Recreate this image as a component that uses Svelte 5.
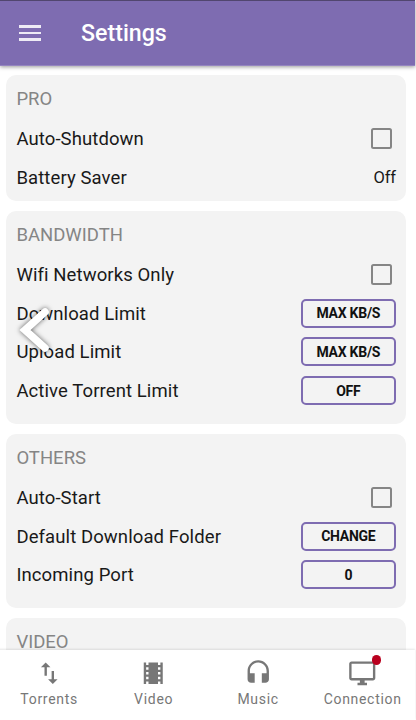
<script lang="ts">
  interface Row {
    label: string;
    kind: "check" | "text" | "button";
    value?: string;
  }

  interface Section {
    title: string;
    compact?: boolean;
    rows: Row[];
  }

  const sections: Section[] = [
    {
      title: "PRO",
      compact: true,
      rows: [
        { label: "Auto-Shutdown", kind: "check" },
        { label: "Battery Saver", kind: "text", value: "Off" }
      ]
    },
    {
      title: "BANDWIDTH",
      rows: [
        { label: "Wifi Networks Only", kind: "check" },
        { label: "Download Limit", kind: "button", value: "MAX KB/S" },
        { label: "Upload Limit", kind: "button", value: "MAX KB/S" },
        { label: "Active Torrent Limit", kind: "button", value: "OFF" }
      ]
    },
    {
      title: "OTHERS",
      rows: [
        { label: "Auto-Start", kind: "check" },
        { label: "Default Download Folder", kind: "button", value: "CHANGE" },
        { label: "Incoming Port", kind: "button", value: "0" }
      ]
    },
    { title: "VIDEO", rows: [] }
  ];

  const tabs = [
    {
      label: "Torrents",
      icon: "M9 3L5 6.99h3V14h2V6.99h3L9 3zm7 14.01V10h-2v7.01h-3L15 21l4-3.99h-3z"
    },
    {
      label: "Video",
      icon: "M18 3v2h-2V3H8v2H6V3H4v18h2v-2h2v2h8v-2h2v2h2V3h-2zM8 17H6v-2h2v2zm0-4H6v-2h2v2zm0-4H6V7h2v2zm10 8h-2v-2h2v2zm0-4h-2v-2h2v2zm0-4h-2V7h2v2z"
    },
    {
      label: "Music",
      icon: "M12 1c-4.97 0-9 4.03-9 9v7c0 1.66 1.34 3 3 3h3v-8H5v-2c0-3.87 3.13-7 7-7s7 3.13 7 7v2h-4v8h3c1.66 0 3-1.34 3-3v-7c0-4.97-4.03-9-9-9z"
    },
    {
      label: "Connection",
      icon: "M21 2H3c-1.1 0-2 .9-2 2v12c0 1.1.9 2 2 2h7v2H8v2h8v-2h-2v-2h7c1.1 0 2-.9 2-2V4c0-1.1-.9-2-2-2zm0 14H3V4h18v12z",
      alert: true
    }
  ];

  let checks: Record<string, boolean> = $state({});
</script>

<div class="screen">
  <header>
    <button class="menu" aria-label="Menu">
      <span></span>
      <span></span>
      <span></span>
    </button>
    <h1>Settings</h1>
  </header>

  <main>
    {#each sections as section}
      <section class:compact={section.compact}>
        <h2>{section.title}</h2>
        {#each section.rows as row}
          <div class="row">
            <span class="label">{row.label}</span>
            {#if row.kind === "check"}
              <input type="checkbox" aria-label={row.label} bind:checked={checks[row.label]} />
            {:else if row.kind === "button"}
              <button class="value-btn">{row.value}</button>
            {:else}
              <span class="value">{row.value}</span>
            {/if}
          </div>
        {/each}
      </section>
    {/each}
  </main>

  <nav>
    {#each tabs as tab}
      <button class="tab">
        <span class="icon">
          <svg viewBox="0 0 24 24"><path d={tab.icon} /></svg>
          {#if tab.alert}<span class="badge"></span>{/if}
        </span>
        <span class="tab-label">{tab.label}</span>
      </button>
    {/each}
  </nav>

  <button class="back" aria-label="Back">
    <svg viewBox="0 0 40 56"><path d="M32 10L12 28L32 46" /></svg>
  </button>
</div>

<style>
  :global(body) {
    background: #fff;
  }

  .screen {
    position: relative;
    box-sizing: border-box;
    width: 416px;
    height: 720px;
    padding-right: 1px;
    display: flex;
    flex-direction: column;
    overflow: hidden;
    font-family: Roboto, sans-serif;
    color: #191919;
  }

  button {
    margin: 0;
    padding: 0;
    border: none;
    background: none;
    font-family: inherit;
    color: inherit;
  }

  header {
    flex: none;
    box-sizing: border-box;
    height: 66px;
    padding-left: 19px;
    display: flex;
    align-items: center;
    gap: 40px;
    background: #7e6cb1;
    border-top: 1px solid #51466f;
    border-bottom: 1px solid #9585c0;
    box-shadow: 0 1px 4px rgba(0, 0, 0, 0.4);
    z-index: 1;
  }

  .menu {
    width: 22px;
    display: flex;
    flex-direction: column;
    gap: 3.5px;
  }

  .menu span {
    height: 2.7px;
    background: #eeebf5;
  }

  h1 {
    margin: 0;
    font-size: 23.2px;
    font-weight: 500;
    line-height: 29px;
    color: #fff;
  }

  main {
    flex: 1;
    min-height: 0;
    padding: 9px 9px 0 6.4px;
    display: flex;
    flex-direction: column;
    gap: 10px;
    overflow: hidden;
  }

  section {
    flex: none;
    padding: 0 10.2px 13.7px 10px;
    background: #f3f3f3;
    border-radius: 10px;
  }

  section.compact {
    padding-bottom: 4.3px;
  }

  h2 {
    margin: 0;
    height: 44.5px;
    font-size: 18.5px;
    font-weight: 400;
    line-height: 48px;
    color: #858585;
  }

  .row {
    height: 38.7px;
    display: flex;
    align-items: center;
    justify-content: space-between;
  }

  .label {
    font-size: 18.5px;
    letter-spacing: 0.1px;
  }

  .value {
    font-size: 16.5px;
    letter-spacing: -0.2px;
  }

  input {
    appearance: none;
    box-sizing: border-box;
    width: 21px;
    height: 21px;
    margin: 0 3.4px 1px 0;
    border: 2px solid #858585;
    border-radius: 2.5px;
  }

  input:checked {
    background: #7e6cb1;
    border-color: #7e6cb1;
  }

  .value-btn {
    box-sizing: border-box;
    width: 95px;
    height: 29px;
    margin-bottom: 1px;
    border: 2px solid #7e6cb1;
    border-radius: 5px;
    font-size: 14px;
    font-weight: 700;
    letter-spacing: -0.25px;
    color: #111;
  }

  nav {
    flex: none;
    box-sizing: border-box;
    height: 70px;
    margin: 0 0 0 -3.5px;
    width: 418px;
    padding-top: 9px;
    display: flex;
    background: #fff;
    box-shadow: 0 -1px 2px rgba(0, 0, 0, 0.1);
    z-index: 1;
  }

  .tab {
    flex: 1;
    display: flex;
    flex-direction: column;
    align-items: center;
    color: #777;
  }

  .icon {
    position: relative;
    width: 28.5px;
    height: 28.5px;
  }

  .icon svg {
    display: block;
    fill: currentColor;
  }

  .badge {
    position: absolute;
    top: -4px;
    right: -4.5px;
    width: 9.5px;
    height: 9.5px;
    border-radius: 50%;
    background: #b9001e;
  }

  .tab-label {
    margin-top: 3px;
    padding-left: 0.8px;
    font-size: 14px;
    line-height: 17px;
    letter-spacing: 0.7px;
  }

  /* floating handle, sits over the list */
  .back {
    position: absolute;
    left: 13px;
    top: 302px;
    width: 40px;
    height: 56px;
    z-index: 2;
  }

  .back svg {
    display: block;
    overflow: visible;
    fill: none;
    stroke: #fff;
    stroke-width: 7.5;
    stroke-linecap: round;
    filter: drop-shadow(0 0 2.5px rgba(0, 0, 0, 0.6));
  }
</style>
